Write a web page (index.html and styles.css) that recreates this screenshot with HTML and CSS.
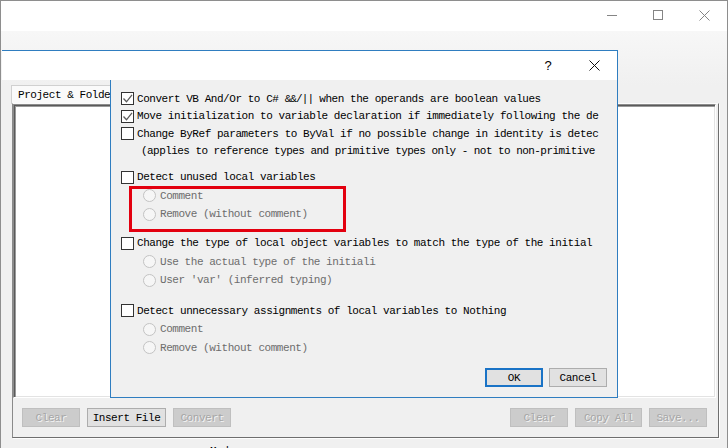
FILE: index.html
```html
<!DOCTYPE html>
<html>
<head>
<meta charset="utf-8">
<link rel="stylesheet" href="styles.css">
</head>
<body>
<div class="window">
  <div class="titlebar">
    <span class="cap-btn"><svg width="10" height="10"><line x1="0" y1="5.5" x2="10" y2="5.5"/></svg></span>
    <span class="cap-btn"><svg width="10" height="10"><rect x="0.5" y="0.5" width="9" height="9"/></svg></span>
    <span class="cap-btn"><svg width="11" height="11"><path d="M0.5 0.5 L10.5 10.5 M10.5 0.5 L0.5 10.5"/></svg></span>
  </div>
  <div class="toolstrip"></div>
  <div class="tabbar"><div class="tab">Project &amp; Folder Conversion</div></div>
  <div class="page">
    <div class="boxes">
      <div class="textbox left"></div>
      <div class="textbox right"></div>
    </div>
    <div class="btnrow">
      <div class="btngroup">
        <button class="btn off w58">Clear</button>
        <button class="btn w79">Insert File</button>
        <button class="btn off w58">Convert</button>
      </div>
      <div class="btngroup">
        <button class="btn off w58">Clear</button>
        <button class="btn off w67">Copy All</button>
        <button class="btn off w58">Save...</button>
      </div>
    </div>
  </div>
  <div class="status">Mode</div>
</div>

<div class="dialog">
  <div class="dlg-title">
    <span class="cap help">?</span>
    <span class="cap"><svg width="11" height="11"><path d="M0.5 0.5 L10.5 10.5 M10.5 0.5 L0.5 10.5"/></svg></span>
  </div>
  <div class="dlg-body">
    <div class="group first">
      <div class="row"><span class="cb"><svg width="11" height="11"><polyline points="1.5,5.5 4.5,8.8 10,1.8"/></svg></span><span>Convert VB And/Or to C# <span class="amp">&amp;&amp;/||</span> when the operands are boolean values</span></div>
      <div class="row"><span class="cb"><svg width="11" height="11"><polyline points="1.5,5.5 4.5,8.8 10,1.8"/></svg></span><span>Move initialization to variable declaration if immediately following the de</span></div>
      <div class="row"><span class="cb"></span><span>Change ByRef parameters to ByVal if no possible change in identity is detec</span></div>
      <div class="row note"><span>(applies to reference types and primitive types only - not to non-primitive</span></div>
    </div>
    <div class="group g2">
      <div class="row"><span class="cb"></span><span>Detect unused local variables</span></div>
      <div class="row opt"><span class="rb"></span><span>Comment</span></div>
      <div class="row opt"><span class="rb"></span><span>Remove (without comment)</span></div>
    </div>
    <div class="group g3">
      <div class="row"><span class="cb"></span><span>Change the type of local object variables to match the type of the initial</span></div>
      <div class="row opt"><span class="rb"></span><span>Use the actual type of the initiali</span></div>
      <div class="row opt"><span class="rb"></span><span>User 'var' (inferred typing)</span></div>
    </div>
    <div class="group g4">
      <div class="row"><span class="cb"></span><span>Detect unnecessary assignments of local variables to Nothing</span></div>
      <div class="row opt"><span class="rb"></span><span>Comment</span></div>
      <div class="row opt"><span class="rb"></span><span>Remove (without comment)</span></div>
    </div>
    <div class="actions">
      <button class="dbtn default">OK</button>
      <button class="dbtn">Cancel</button>
    </div>
    <div class="highlight"></div>
  </div>
</div>
</body>
</html>
```

FILE: styles.css
```css
* { box-sizing: border-box; }

html, body { margin: 0; }

body {
  position: relative;
  width: 728px;
  height: 448px;
  overflow: hidden;
  padding: 1px 0 0 1px;
  background: #8e8e8e;
  font-family: "Liberation Mono", monospace;
  font-size: 11px;
  letter-spacing: -0.45px;
  color: #000;
}

.window {
  width: 726px;
  height: 447px;
  background: #f0f0f0;
  display: flex;
  flex-direction: column;
}

.titlebar {
  height: 30px;
  flex: none;
  background: #fff;
  display: flex;
  justify-content: flex-end;
}

.cap-btn {
  width: 46px;
  display: flex;
  justify-content: center;
  padding-top: 9px;
}

.cap-btn svg { stroke: #858585; stroke-width: 1; fill: none; }

.toolstrip {
  height: 54px;
  flex: none;
  background: linear-gradient(#f7f7f7, #f0f0f0);
}

.tabbar {
  height: 18px;
  flex: none;
  padding-left: 10px;
}

.tab {
  display: inline-block;
  height: 19px;
  padding: 3px 6px 0 6px;
  line-height: 13px;
  background: #fafafa;
  border: 1px solid #d0d0d0;
  border-bottom: 0;
  white-space: nowrap;
}

.page {
  flex: none;
  width: 707px;
  height: 335px;
  margin-left: 11px;
  border-top: 1px solid #fcfcfc;
  border-left: 1px solid #8a8a8a;
  border-right: 1px solid #6e6e6e;
  border-bottom: 1px solid #6e6e6e;
  box-shadow: 1px 1px 0 #fdfdfd;
  display: flex;
  flex-direction: column;
}

.boxes {
  height: 294px;
  display: flex;
  gap: 4px;
  padding-right: 2px;
}

.textbox {
  background: #fff;
  border: 1px solid;
  border-color: #8c8c8c #fff #fff #8c8c8c;
  box-shadow: inset 1px 1px 0 #5a5a5a, inset 2px 2px 0 #9a9a9a, inset -1px -1px 0 #e3e3e3;
}

.textbox.left { width: 352px; }
.textbox.right { flex: 1; }

.btnrow {
  margin-top: 10px;
  height: 19px;
  padding: 0 11px 0 9px;
  display: flex;
  justify-content: space-between;
}

.btngroup { display: flex; gap: 7px; }

.btn {
  height: 19px;
  padding: 0;
  font: inherit;
  letter-spacing: inherit;
  color: #000;
  background: #e1e1e1;
  border: 1px solid #adadad;
}

.btn.off {
  background: #cccccc;
  border-color: #bfbfbf;
  color: #a6a6a6;
  text-shadow: 1px 1px 0 #f4f4f4;
}

.w58 { width: 58px; }
.w67 { width: 67px; }
.w79 { width: 79px; }

.status {
  margin-top: 7px;
  padding-left: 209px;
  line-height: 12px;
}

/* dialog window */
.dialog {
  position: absolute;
  left: 2px;
  top: 50px;
  width: 616px;
  height: 348px;
  display: flex;
  flex-direction: column;
}

.dlg-title {
  height: 30px;
  flex: none;
  background: #fff;
  border-top: 1px solid #2f7dc0;
  border-right: 1px solid #2f7dc0;
  display: flex;
  justify-content: flex-end;
}

.cap {
  width: 46px;
  display: flex;
  align-items: center;
  justify-content: center;
}

.cap svg { stroke: #111; stroke-width: 1; fill: none; }

.help {
  font-family: "Liberation Sans", sans-serif;
  font-size: 13px;
  letter-spacing: 0;
  padding-bottom: 1px;
}

.dlg-body {
  position: relative;
  flex: 1;
  margin-left: 108px;
  background: #f0f0f0;
  border: 1px solid #2f7dc0;
  border-top: 0;
  padding: 10px;
  display: flex;
  flex-direction: column;
}

.row {
  display: flex;
  align-items: center;
  height: 18.5px;
  white-space: nowrap;
}

.amp { letter-spacing: -0.9px; }

.group.first .row { height: 17.5px; }
.g2 { margin-top: 8px; }
.g3 { margin-top: 10.5px; }
.g4 { margin-top: 12px; }

.cb {
  width: 13px;
  height: 13px;
  flex: none;
  margin-right: 3px;
  background: #fff;
  border: 1px solid #333;
}

.cb svg { display: block; stroke: #5c5c5c; stroke-width: 1.3; fill: none; }

.note { padding-left: 20px; letter-spacing: -0.55px; }

.opt { padding-left: 22px; color: #6d6d6d; }

.rb {
  width: 13px;
  height: 13px;
  flex: none;
  margin-right: 4px;
  border-radius: 50%;
  background: #f6f6f6;
  border: 1px solid #c3c3c3;
}

.actions {
  margin-top: auto;
  display: flex;
  justify-content: flex-end;
  gap: 6px;
}

.dbtn {
  width: 58px;
  height: 19px;
  padding: 0;
  font: inherit;
  letter-spacing: inherit;
  color: #000;
  background: #e1e1e1;
  border: 1px solid #adadad;
}

.dbtn.default { border: 2px solid #1a73c6; }

.highlight {
  position: absolute;
  left: 18px;
  top: 106px;
  width: 217px;
  height: 46px;
  border: 3px solid #e3000f;
}
```
